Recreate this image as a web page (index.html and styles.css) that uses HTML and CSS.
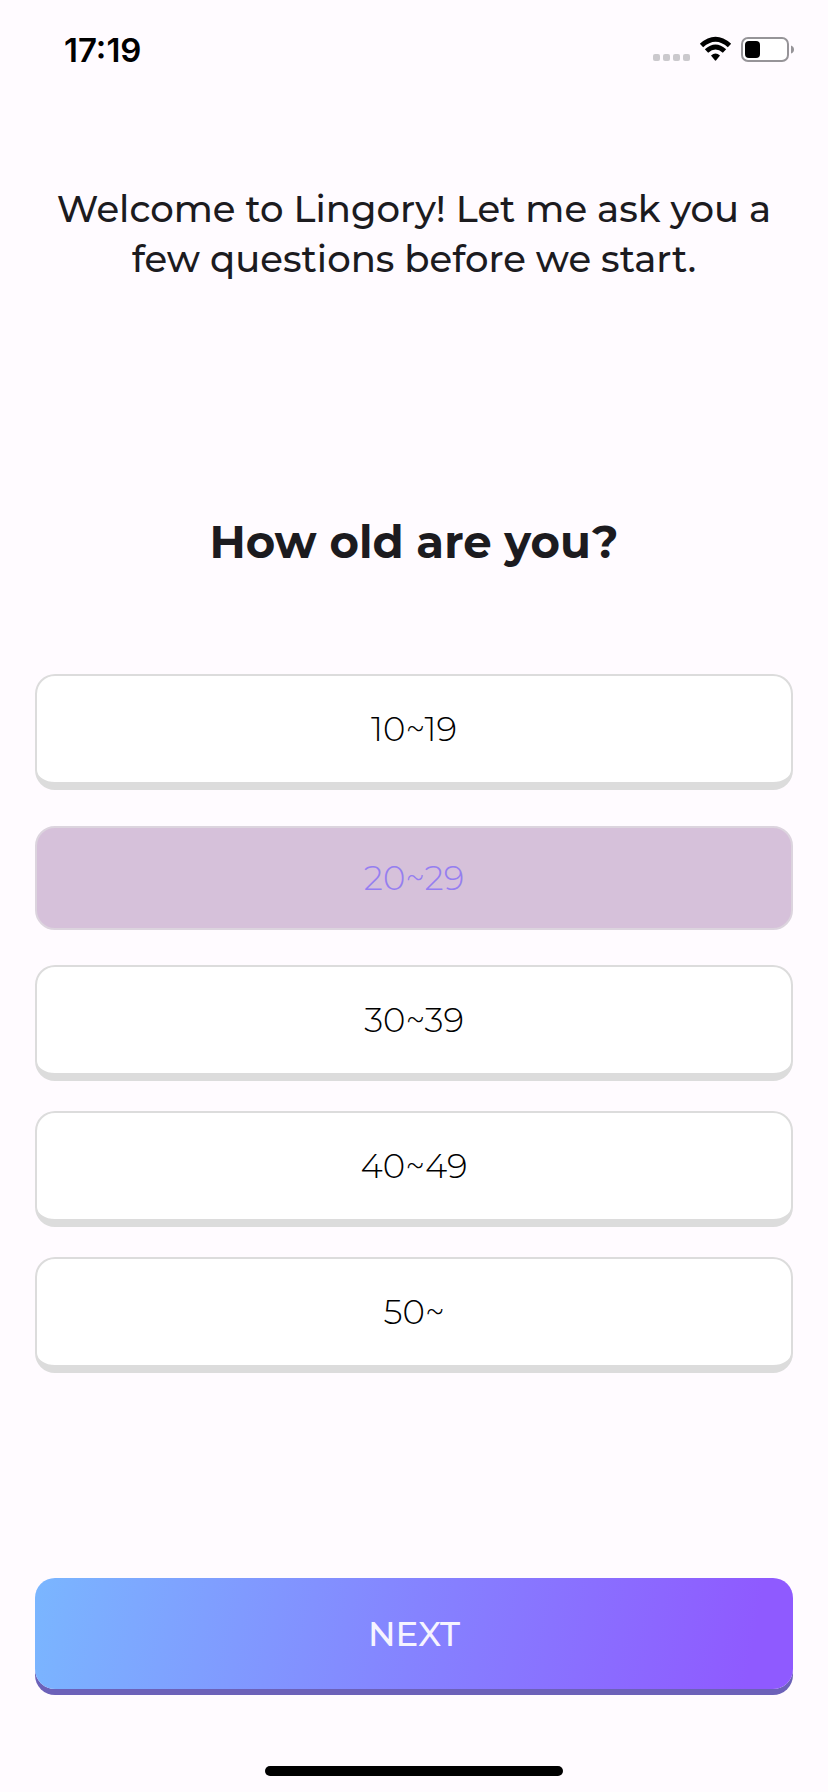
FILE: index.html
```html
<!DOCTYPE html>
<html lang="en">
<head>
<meta charset="utf-8">
<meta name="viewport" content="width=device-width, initial-scale=1">
<title>Lingory</title>
<link rel="stylesheet" href="styles.css">
</head>
<body>
<header class="status-bar">
  <time class="clock">17:19</time>
  <svg class="status-icons" viewBox="0 0 144 28" width="144" height="28" aria-hidden="true">
    <g fill="#cbc9cd">
      <rect x="3" y="18" width="7" height="7" rx="2"/>
      <rect x="13" y="18" width="7" height="7" rx="2"/>
      <rect x="23" y="18" width="7" height="7" rx="2"/>
      <rect x="33" y="18" width="7" height="7" rx="2"/>
    </g>
    <g fill="none" stroke="#000" stroke-width="5">
      <path d="M51.500 9.500Q65.500-3 79.500 9.500"/>
      <path d="M56.500 15Q65.500 7 74.500 15"/>
    </g>
    <path d="M61 19.500Q65.500 15.500 70 19.500L66.200 24.300Q65.500 25 64.800 24.300Z"/>
    <rect x="92" y="2" width="46" height="23" rx="6" fill="#fff" stroke="#969498" stroke-width="2"/>
    <rect x="95" y="5" width="15" height="17" rx="4"/>
    <path d="M141 9.500Q144 10.500 144 13.500T141 17.500Z" fill="#969498"/>
  </svg>
</header>
<main class="survey">
  <p class="intro">Welcome to Lingory! Let me ask you a few questions before we start.</p>
  <h1 class="question" id="question">How old are you?</h1>
  <div class="options" role="radiogroup" aria-labelledby="question">
    <label class="option"><input class="option-input" type="radio" name="age">10~19</label>
    <label class="option option-selected"><input class="option-input" type="radio" name="age" checked>20~29</label>
    <label class="option"><input class="option-input" type="radio" name="age">30~39</label>
    <label class="option"><input class="option-input" type="radio" name="age">40~49</label>
    <label class="option"><input class="option-input" type="radio" name="age">50~</label>
  </div>
  <button class="next" type="button">NEXT</button>
</main>
<div class="home-indicator"></div>
</body>
</html>
```
FILE: styles.css
```css
* {
  box-sizing: border-box;
}

body {
  margin: 0;
  min-height: 100vh;
  display: flex;
  flex-direction: column;
  background: #fffbff;
  color: #1c1b1f;
  font-family: Montserrat, Inter, "Liberation Sans", sans-serif;
}

.status-bar {
  display: flex;
  align-items: center;
  justify-content: space-between;
  height: 100px;
  padding: 0 34px 0 64px;
  color: #000;
}

.clock {
  font-family: Inter, sans-serif;
  font-size: 33px;
  font-weight: 600;
}

.survey {
  flex: 1;
  display: flex;
  flex-direction: column;
  padding: 84px 35px 71px;
  text-align: center;
}

.intro {
  margin: 0;
  font-size: 37px;
  font-weight: 500;
  line-height: 50px;
}

.question {
  margin: 233px 0 107px;
  font-size: 45px;
  font-weight: 700;
  line-height: 50px;
}

.options {
  display: flex;
  flex-direction: column;
  gap: 30px;
}

.option {
  position: relative;
  display: flex;
  align-items: center;
  justify-content: center;
  height: 116px;
  border: 2px solid #dcdcdc;
  border-bottom-width: 8px;
  border-radius: 20px;
  background: #fff;
  color: #000;
  font-size: 34px;
  font-weight: 300;
  cursor: pointer;
}

.option-selected {
  height: 104px;
  margin: 6px 0 5px;
  border-bottom-width: 2px;
  border-color: #dcd4de;
  background: #d6c1da;
  color: #957ef0;
}

.option-input {
  position: absolute;
  inset: 0;
  margin: 0;
  opacity: 0;
  cursor: pointer;
}

.next {
  height: 111px;
  margin: auto 0 6px;
  border: 0;
  border-radius: 20px;
  background: linear-gradient(100deg, #7ab6ff, #8583ff 50%, #8f5aff 94%);
  box-shadow: 0 6px #6c61b9;
  color: #f6f4ff;
  font-family: inherit;
  font-size: 34px;
  font-weight: 500;
}

.home-indicator {
  align-self: center;
  width: 36%;
  height: 10px;
  margin-bottom: 16px;
  border-radius: 5px;
  background: #000;
}
```
